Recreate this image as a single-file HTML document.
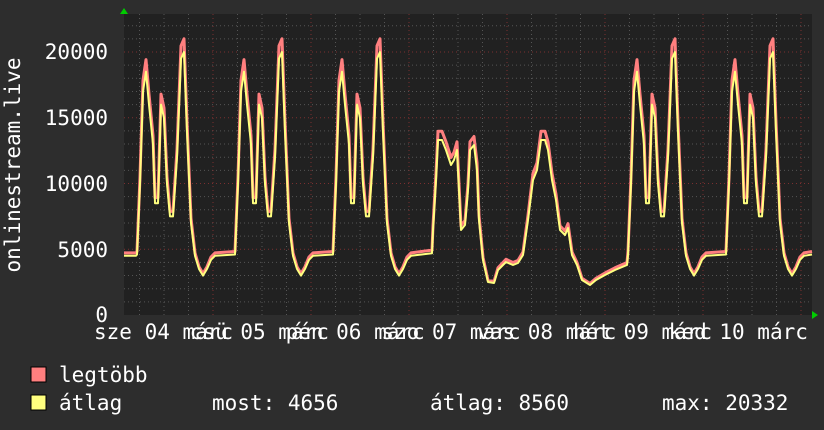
<!DOCTYPE html>
<html><head><meta charset="utf-8"><style>
body{margin:0;background:#2d2d2d;width:824px;height:430px;overflow:hidden;}
svg{display:block}
text{font-family:"DejaVu Sans Mono","Liberation Mono",monospace;fill:#fff;font-size:21px}
</style></head><body>
<svg id="g" width="824" height="430" xmlns="http://www.w3.org/2000/svg">
<rect x="0" y="0" width="824" height="430" fill="#2d2d2d"/>
<rect x="124" y="14" width="688" height="301" fill="#212121"/>
<g id="grid"></g>
<path id="red" fill="none" stroke="#ff7f7f" stroke-width="3" stroke-linejoin="round"/>
<path id="yel" fill="none" stroke="#ffff7f" stroke-width="2" stroke-linejoin="round"/>
<polygon points="120,14 128,14 124,8" fill="#00cc00"/>
<polygon points="812,311 812,319 818,315" fill="#00cc00"/>
<text x="108" y="59" text-anchor="end">20000</text>
<text x="108" y="125" text-anchor="end">15000</text>
<text x="108" y="191" text-anchor="end">10000</text>
<text x="108" y="257" text-anchor="end">5000</text>
<text x="108" y="322" text-anchor="end">0</text>
<text transform="translate(20,165) rotate(-90)" text-anchor="middle">onlinestream.live</text>
<g id="xl"></g>
<rect x="31" y="367" width="15" height="15" fill="#ff7f7f" stroke="#000"/>
<rect x="31" y="395" width="15" height="15" fill="#ffff7f" stroke="#000"/>
<text x="59" y="382">legtöbb</text>
<text x="59" y="410">átlag</text>
<text x="212" y="410">most: 4656</text>
<text x="430" y="410">átlag: 8560</text>
<text x="662" y="410">max: 20332</text>
</svg>
<script>
var g=document.getElementById('grid'),s='';
for(var v=1;v<=22;v++){var y=315-v*13.15;if(y<14)break;var maj=v%5==0;
s+='<line x1="124" x2="812" y1="'+y+'" y2="'+y+'" stroke="'+(maj?'#7a3030':'#555')+'" stroke-dasharray="1,3"/>';}
for(var x=139.5;x<812;x+=24.5){var m=Math.abs(((x-212)/98)-Math.round((x-212)/98))<0.05;
s+='<line y1="14" y2="315" x1="'+x+'" x2="'+x+'" stroke="'+(m?'#7a3030':'#555')+'" stroke-dasharray="1,3"/>';}
g.innerHTML=s;
var T=[[0,4.6],[3,10],[6,17],[9,18.5],[12,16],[16,13],[18,8.5],[21,8.5],[24,16],[27,15],[30,10],[33,7.5],[36,7.5],[40,12],[44,19.5],[47,20],[50,14],[54,7],[58,4.5],[62,3.5],[66,3],[70,3.5],[74,4.2],[78,4.5]];
var P=[[124,4.5],[136,4.5]];
[137,235,333].forEach(function(r){T.forEach(function(t){P.push([r+t[0],t[1]])})});
var C=[[432,4.7],[433,230],[436,180],[438,140],[442,140],[446,150],[451,165],[454,160],[457,150],[459,190],[461,230],[465,225],[468,190],[470,150],[474,145],[477,170],[479,220],[483,260],[488,282],[494,283],[498,270],[506,262],[513,265],[518,263],[523,255],[528,220],[533,180],[537,170],[541,140],[545,140],[548,150],[552,180],[556,200],[560,230],[565,235],[568,228],[572,255],[577,265],[582,280],[590,285],[596,280],[605,275],[615,270],[627,265]];
C.forEach(function(c,i){if(i==0)P.push([c[0],c[1]]);else P.push([c[0],(315-c[1])/13.15])});
[628,726].forEach(function(r){T.forEach(function(t){P.push([r+t[0],t[1]])})});
P.push([812,4.6]);
var a='',b='';P.forEach(function(p,i){var y=315-p[1]*13.15,yr=315-p[1]*13.15*1.05;a+=(i?'L':'M')+p[0]+','+y.toFixed(1);b+=(i?'L':'M')+p[0]+','+yr.toFixed(1);});
document.getElementById('yel').setAttribute('d',a);document.getElementById('red').setAttribute('d',b);
var d=['sze 04 márc','csü 05 márc','pén 06 márc','szo 07 márc','vas 08 márc','hét 09 márc','ked 10 márc'],h='';
d.forEach(function(t,i){h+='<text x="'+(94+95.8*i)+'" y="339">'+t+'</text>'});
document.getElementById('xl').innerHTML=h;
</script>
</body></html>
